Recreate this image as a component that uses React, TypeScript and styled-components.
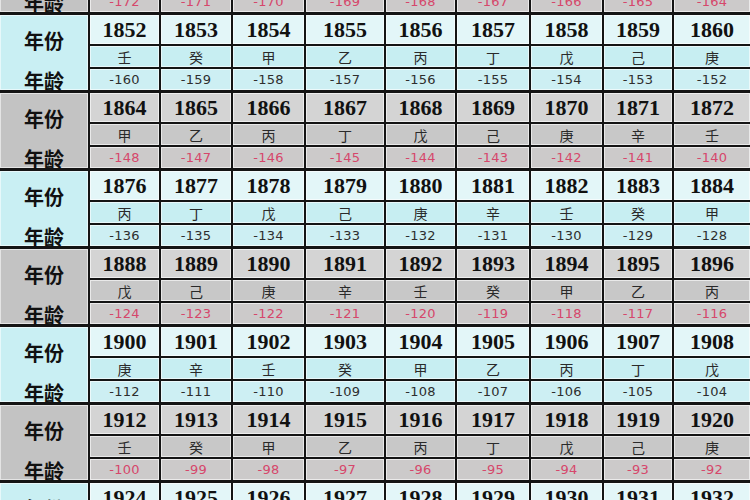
import React, { FC } from 'react';
import styled, { createGlobalStyle } from 'styled-components';

type Tone = 'cyan' | 'gray';

// heavenly stems, indexed by (year - 4) % 10
const STEMS = ['甲', '乙', '丙', '丁', '戊', '己', '庚', '辛', '壬', '癸'];
const BASE_YEAR = 2012;
const FIRST_YEAR = 1840;
const GROUPS = 8;
const PER_ROW = 9;

const palette = {
  cyan: { label: '#c9eff3', year: '#e3f6f8', stem: '#c7eef2', age: '#cdeff3', ageText: '#2e2e2e' },
  gray: { label: '#c3c3c3', year: '#d4d4d4', stem: '#c8c8c8', age: '#cccaca', ageText: '#d6476b' },
};

const GlobalStyle = createGlobalStyle`
  html, body {
    margin: 0;
    padding: 0;
    background: #fff;
  }
`;

const Page = styled.div`
  width: 750px;
  height: 500px;
  overflow: hidden;
  background: #141414;
`;

// first group is cropped so only its age row shows at the top edge
const Table = styled.div`
  display: flex;
  flex-direction: column;
  gap: 3px;
  margin-top: -63px;
`;

const Group = styled.div`
  display: grid;
  grid-template-columns: 88px 69px 70px 71px 78px 69px 72px 71px 68px 76px;
  grid-template-rows: 29px 21px 21px;
  gap: 2px;
`;

const Label = styled.div<{ $tone: Tone }>`
  grid-row: 1 / span 3;
  display: flex;
  flex-direction: column;
  align-items: center;
  justify-content: space-between;
  padding-top: 17px;
  background: ${(p) => palette[p.$tone].label};
  box-shadow: inset 0 0 0 1px rgba(255, 255, 255, 0.55), 1px 0 0 #141414;
  font: 700 20px/18px 'Noto Sans CJK SC', sans-serif;
  color: #111;
`;

const Cell = styled.div`
  display: flex;
  align-items: center;
  justify-content: center;
  box-shadow: inset 0 0 0 1px rgba(255, 255, 255, 0.6);
`;

const YearCell = styled(Cell)<{ $tone: Tone }>`
  background: ${(p) => palette[p.$tone].year};
  font: 700 22px/1 'Liberation Serif', serif;
  color: #111;
  padding-top: 1px;
`;

const StemCell = styled(Cell)<{ $tone: Tone }>`
  background: ${(p) => palette[p.$tone].stem};
  font: 400 14px/1 'Noto Sans CJK SC', sans-serif;
  color: #2a2a2a;
`;

const AgeCell = styled(Cell)<{ $tone: Tone }>`
  background: ${(p) => palette[p.$tone].age};
  font: 400 13px/1 'DejaVu Sans', sans-serif;
  color: ${(p) => palette[p.$tone].ageText};
  letter-spacing: 0.3px;
`;

const YearGroup: FC<{ start: number; tone: Tone }> = ({ start, tone }) => {
  const years = Array.from({ length: PER_ROW }, (_, i) => start + i);
  return (
    <Group>
      <Label $tone={tone}>
        <span>年份</span>
        <span>年龄</span>
      </Label>
      {years.map((y) => (
        <YearCell key={`y${y}`} $tone={tone}>
          {y}
        </YearCell>
      ))}
      {years.map((y) => (
        <StemCell key={`s${y}`} $tone={tone}>
          {STEMS[(y - 4) % 10]}
        </StemCell>
      ))}
      {years.map((y) => (
        <AgeCell key={`a${y}`} $tone={tone}>
          {y - BASE_YEAR}
        </AgeCell>
      ))}
    </Group>
  );
};

const App: FC = () => {
  const starts = Array.from({ length: GROUPS }, (_, i) => FIRST_YEAR + i * 12);
  return (
    <>
      <GlobalStyle />
      <Page>
        <Table>
          {starts.map((s, i) => (
            <YearGroup key={s} start={s} tone={i % 2 === 0 ? 'gray' : 'cyan'} />
          ))}
        </Table>
      </Page>
    </>
  );
};

export default App;
